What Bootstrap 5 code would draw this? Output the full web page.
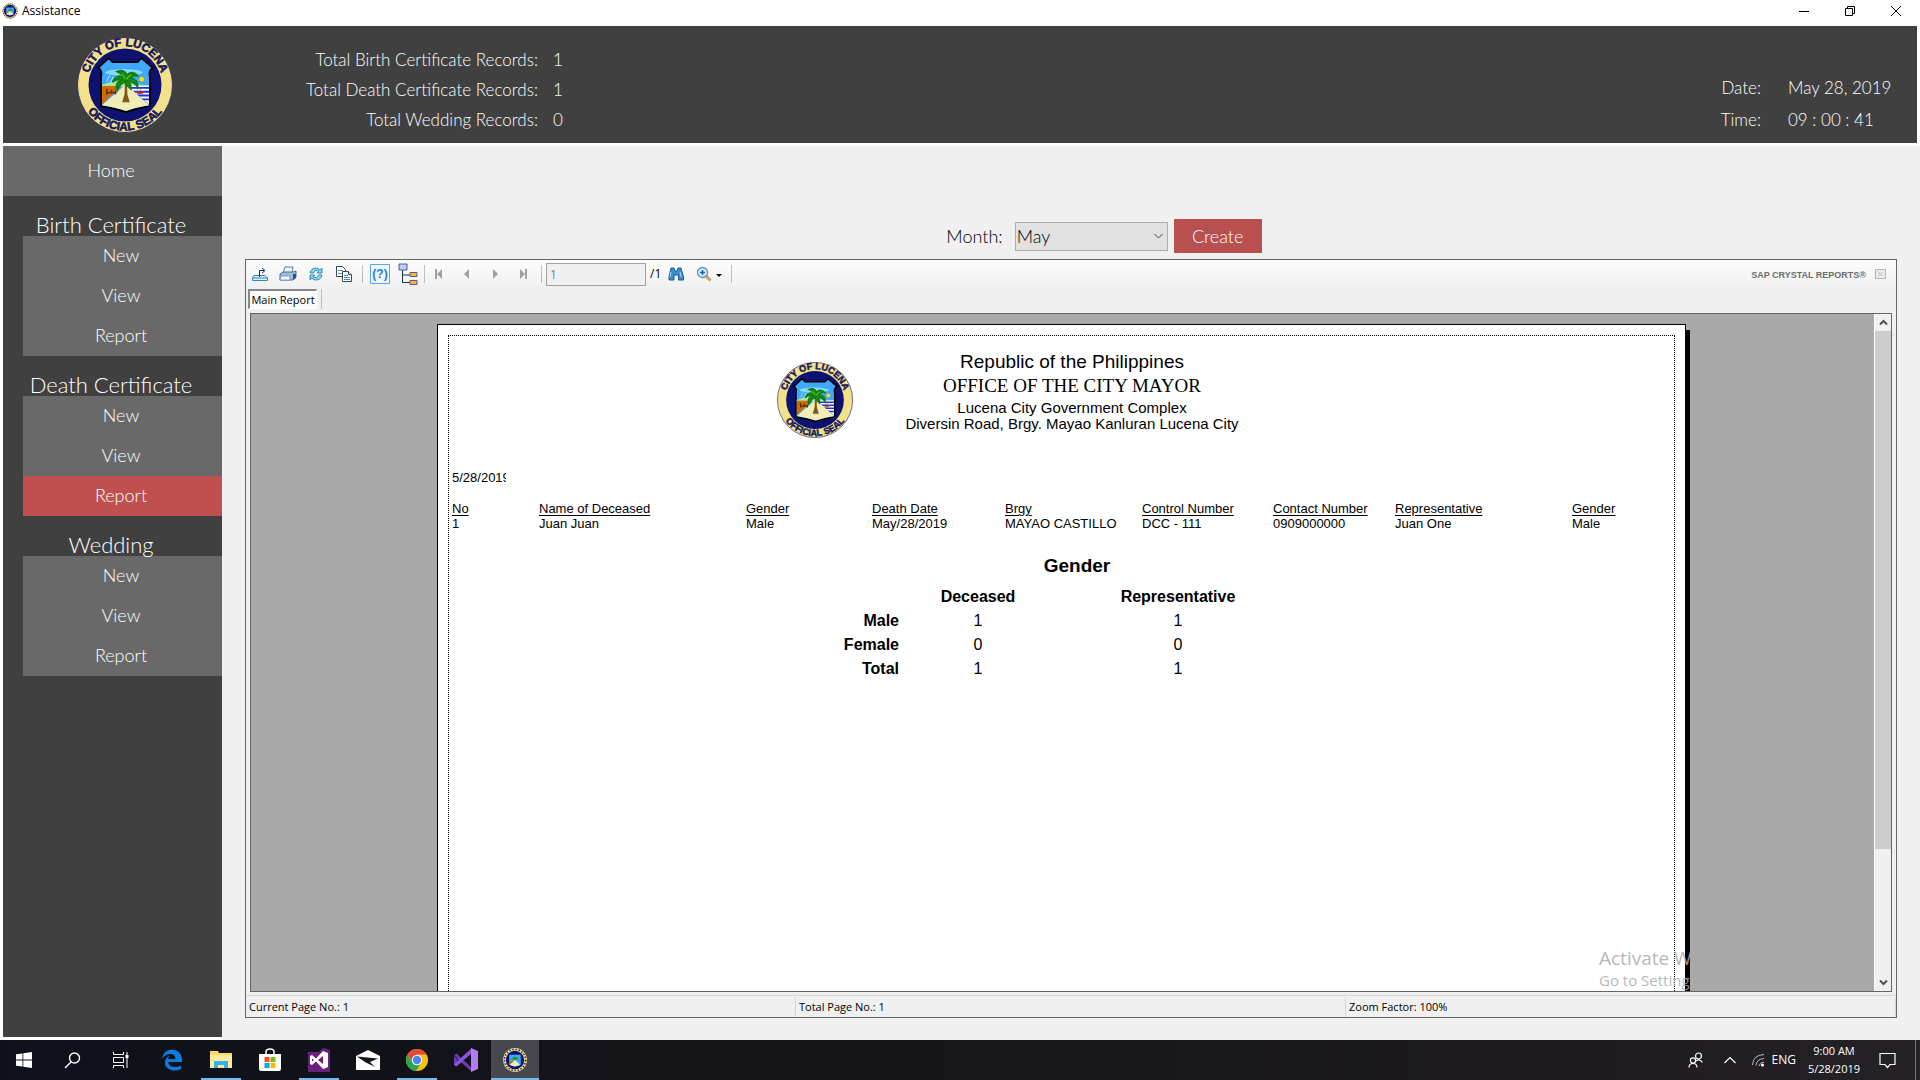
<!DOCTYPE html>
<html lang="en">
<head>
<meta charset="utf-8">
<meta name="viewport" content="width=device-width, initial-scale=1">
<title>Assistance</title>
<link href="https://cdn.jsdelivr.net/npm/bootstrap@5.3.0/dist/css/bootstrap.min.css" rel="stylesheet">
<style>
  :root { --gothic: "Century Gothic", "URW Gothic", Lato, sans-serif; --ui: "Segoe UI", "Open Sans", "Noto Sans", sans-serif; --arial: "Liberation Sans", Arial, sans-serif; }
  body { height: 100vh; min-height: 640px; background: #fff; color: #000; font-family: var(--ui); font-size: 12px; line-height: 16px; overflow: hidden; }
  svg { display: block; flex: none; }
  button { padding: 0; border: 0; background: none; color: inherit; }
  /* window frame */
  .titlebar { flex: none; height: 26px; padding: 0 18px 4px 2px; }
  .titlebar h1 { font-size: 12px; line-height: 16px; margin: 0; }
  .win-buttons { gap: 34px; }
  .masthead { flex: none; margin: 0 3px 3px; padding: 0 26px 0 74px; height: 117px; background: #404040; color: #fff; font-family: var(--gothic); font-weight: 300; font-size: 17px; }
  .totals { display: grid; grid-template-columns: 365px auto; align-content: start; column-gap: 15px; line-height: 30px; padding-top: 19px; margin: 0; text-align: right; }
  .totals dt, .clock dt { font-weight: 300; }
  .totals dd, .clock dd { margin: 0; text-align: left; }
  .clock { display: grid; grid-template-columns: auto 103px; align-content: start; column-gap: 27px; line-height: 32px; padding-top: 46px; margin: 0; text-align: right; white-space: nowrap; }
  /* side menu */
  .side { width: 219px; margin: 0 0 3px 3px; background: #404040; color: #fff; font-family: var(--gothic); font-weight: 300; flex: none; }
  .side a { display: block; height: 40px; line-height: 39px; font-size: 18px; text-align: center; color: #fff; text-decoration: none; background: #696969; padding-right: 3px; }
  .side .home { height: 50px; line-height: 49px; }
  .side h2 { font-size: 22px; line-height: 22px; font-weight: 300; margin: 0; padding: 18px 3px 0 0; text-align: center; }
  .side .sub { margin-left: 20px; }
  .side a.active { background: #c05050; }
  /* filter */
  .work { background: #f0f0f0; padding: 0 23px 22px 23px; min-width: 0; }
  .filter { flex: none; height: 113px; padding: 0 0 6px 66px; font-family: var(--gothic); font-size: 18px; font-weight: 300; }
  .filter .form-select { width: 153px; height: 29px; padding: 0 1px; font-size: 18px; font-weight: 300; line-height: 26px; color: #000; border: 1px solid #adadad; border-radius: 0; background: #e1e1e1 url("data:image/svg+xml,%3Csvg xmlns='http://www.w3.org/2000/svg' viewBox='0 0 9 6'%3E%3Cpath d='M.5 1l4 4 4-4' fill='none' stroke='%23444'/%3E%3C/svg%3E") no-repeat right 4px center / 9px 6px; }
  .filter .btn { width: 88px; height: 34px; margin-left: 6px; padding: 0; border: 0; border-radius: 0; background: #b85050; color: #fff; font-size: 18px; font-weight: 300; }
  /* report viewer */
  .viewer { border: 1px solid #646464; min-height: 0; }
  .tools { flex: none; height: 28px; background: linear-gradient(#fdfdfd, #f0f0f0); padding: 0 2px 0 0; }
  .tools button { display: flex; align-items: center; justify-content: center; width: 28px; height: 26px; }
  .tools .nav-btn { width: 28px; color: #a0a0a0; }
  .tools .find { width: 30px; }
  .tools .zoom-btn { width: 36px; }
  .tools .params { width: 33px; }
  .tools .tree { width: 24px; }
  .sep { width: 1px; height: 18px; background: #bdbdbd; }
  .pageno { width: 100px; height: 23px; border: 1px solid #a0a0a0; background: #f0f0f0; color: #838383; font-size: 12px; padding: 0 3px; line-height: 20px; }
  .brand { font: bold 9px/14px var(--arial); color: #6d6d6d; padding-top: 2px; }
  .tabs-row { flex: none; height: 25px; padding: 1px 2px 4px; }
  .tabs-row .tab { width: 69px; height: 20px; font-size: 11px; line-height: 16px; color: #000; background: #fafafa; border: 1px solid; border-width: 2px 1px 1px 2px; border-color: #888 #fff #fff #888; white-space: nowrap; }
  .stage { margin: 0 4px 3px; border: 1px solid #646464; background: #a9a9a9; min-height: 0; }
  .canvas-area { overflow: hidden; padding: 10px 2px 0 0; position: relative; min-width: 0; }
  .paper { width: 1249px; height: 900px; margin: 0 auto; border: 1px solid #000; background: #fff; box-shadow: 4px 6px 0 #000; padding: 10px; font-family: var(--arial); }
  .margin-box { height: 100%; border: 1px dotted #000; padding: 14px 0 0 3px; }
  .letterhead { margin-right: 110px; gap: 52px; }
  .letterhead .seal { margin-top: 12px; }
  .lh-text { line-height: 16px; font-size: 15px; text-align: center; }
  .lh-big { font-size: 19px; line-height: 24px; }
  .lh-office { font-family: "Felix Titling", "Liberation Serif", serif; font-size: 19px; line-height: 23px; margin-bottom: 3px; }
  .printed { width: 54px; overflow: hidden; font-size: 13px; line-height: 15px; margin: 32px 0 16px; }
  .records { table-layout: fixed; width: 100%; font-size: 13px; line-height: 15px; }
  .records th, .records td { padding: 0; font-weight: 400; white-space: nowrap; }
  .records th { text-decoration: underline; text-underline-offset: 2px; }
  .tally { margin: 23px auto 0 361px; font-size: 16px; line-height: 24px; text-align: center; }
  .tally caption { caption-side: top; color: #000; text-align: center; font-size: 19px; font-weight: 700; line-height: 24px; padding: 0 0 7px 42px; }
  .tally th, .tally td { padding: 0; }
  .tally tbody th { text-align: right; }
  .scroll { width: 17px; flex: none; background: #f0f0f0; border-left: 1px solid #fff; }
  .scroll button { width: 16px; height: 17px; display: flex; align-items: center; justify-content: center; }
  .thumb { height: 80.5%; background: #cdcdcd; }
  .status { flex: none; height: 22px; border-top: 1px solid #d5d5d5; font-size: 11px; line-height: 20px; }
  .status > div { border-right: 1px solid #d5d5d5; padding-left: 3px; margin-top: 1px; width: 551px; }
  .activate { position: absolute; right: 25px; bottom: 0; width: 250px; color: rgba(170,170,170,.85); white-space: nowrap; font-size: 15px; line-height: 22px; }
  .activate strong { font-weight: 400; font-size: 19px; display: block; }
  /* taskbar */
  .taskbar { flex: none; height: 40px; background: linear-gradient(90deg, #0e111a, #151419 40%, #1b191e 75%, #252226); color: #fff; font-size: 12px; }
  .app { width: 48px; height: 40px; margin-right: 1px; display: flex; align-items: center; justify-content: center; border-bottom: 2px solid transparent; padding-top: 2px !important; }
  .app.sys { margin-right: 0; }
  .app.open { background: linear-gradient(#76b9ed, #76b9ed) no-repeat center bottom / 40px 2px; background-origin: border-box; background-clip: border-box; }
  .app.now { background: #47484d; border-color: #76b9ed; }
  .tray { padding-right: 4px; }
  .tray .when { width: 56px; text-align: center; line-height: 18px; margin: 0 17px 0 10px; white-space: nowrap; font-size: 11px; }
  .desktop { width: 1px; height: 40px; background: #77757a; margin-left: 19px; }
</style>
</head>
<body class="d-flex flex-column">

<svg width="0" height="0" class="position-absolute" aria-hidden="true">
  <defs>
    <path id="arcTop" d="M11.400 54A39 39 0 1 1 88.600 54"/>
    <path id="arcBottom" d="M2.500 55A47.800 47.800 0 0 0 97.500 55"/>
    <symbol id="seal" viewBox="0 0 100 100">
      <circle cx="50" cy="50" r="49.500" fill="#f3e08a" stroke="#14165e" stroke-width=".8"/>
      <circle cx="50" cy="50" r="38" fill="#0d1270"/>
      <path d="M33 22L37 26H63L67 22L79 32Q74 35 76 42V72Q62 74 51 78Q38 74 25 72V42Q27 35 22 32Z" fill="#3fa9ff" stroke="#000" stroke-width="2" stroke-linejoin="round"/>
      <ellipse cx="49" cy="37" rx="20" ry="4" fill="#7fdcf8" stroke="#2a86b8" stroke-width=".5"/>
      <path d="M26 50Q38 44 48 47T75 50V52H26Z" fill="#a6e6a0"/>
      <path d="M26 51H46L26 70Z" fill="#cf6a00"/>
      <path d="M52 51H75V70Z" fill="#fff"/>
      <path d="M54 53H75M58 57H75M62 61H75M66 65H75" stroke="#1c2cf0" stroke-width="2"/>
      <path d="M49 51L26 71Q40 73 51 77Q62 73 75 71L53 51Z" fill="#f1ecb8"/>
      <path d="M31 54v6M31 58h10M36 58v-3M40 60v-4" stroke="#5a2c00" stroke-width="1.500" fill="none"/>
      <path d="M62 57h8l-2 2h-5zM66 57v-4" stroke="#a83a10" fill="#a83a10" stroke-width=".6"/>
      <path d="M34 40l-3 6M38 41l-3 6M42 41l-3 6" stroke="#dff" stroke-width=".8"/>
      <circle cx="67.500" cy="44" r="2.600" fill="#ffe600" stroke="#c08a00" stroke-width=".4"/>
      <path d="M50 46L49.500 60 47 68H55L52.500 60 52 46Z" fill="#7a5b10"/>
      <path d="M51 46Q44 35 37 47Q43 42 47 45Q39 47 42 55Q45 48 50 47Q52 51 56 54Q56 48 53 46Q60 46 63 52Q64 44 55 43Q60 38 64 41Q57 34 52 40Q49 33 42 36Q49 39 51 46Z" fill="#1f9a10" stroke="#157a0c" stroke-width="2"/>
      <path d="M46 39q3 1 4 5M56 40q-3 1-4 4" stroke="#6be63a" fill="none"/>
      <g font-family="Liberation Sans, Arial, sans-serif" font-weight="700" font-size="12" fill="#14165e" stroke="#14165e" stroke-width=".6" text-anchor="middle">
        <text><textPath href="#arcTop" startOffset="50%">CITY OF LUCENA</textPath></text>
        <text><textPath href="#arcBottom" startOffset="50%">OFFICIAL SEAL</textPath></text>
      </g>
    </symbol>
    <symbol id="sealMini" viewBox="0 0 100 100">
      <circle cx="50" cy="50" r="44" fill="#0d1270" stroke="#f3e08a" stroke-width="11"/>
      <circle cx="50" cy="50" r="44" fill="none" stroke="#14165e" stroke-width="6" stroke-dasharray="6 7"/>
      <path d="M26 28H74V70L50 78 26 70Z" fill="#3fa9ff"/>
      <path d="M26 54H46L26 70Z" fill="#cf6a00"/><path d="M50 50L28 71 50 77 72 71Z" fill="#f1ecb8"/>
      <path d="M34 46Q50 26 66 46L50 50Z" fill="#1f9a10"/>
    </symbol>
  </defs>
</svg>

<div class="titlebar d-flex align-items-center justify-content-between">
  <div class="d-flex align-items-center gap-1">
    <svg width="16" height="16"><use href="#sealMini"/></svg>
    <h1>Assistance</h1>
  </div>
  <div class="win-buttons d-flex align-items-center">
    <button aria-label="Minimize"><svg width="12" height="12" stroke="#000"><path d="M1 6.500H11"/></svg></button>
    <button aria-label="Restore"><svg width="12" height="12" fill="none" stroke="#000"><path d="M1.500 3.500h7v7h-7zM3.500 3.500v-2h7v7h-2"/></svg></button>
    <button aria-label="Close"><svg width="12" height="12" stroke="#000"><path d="M1 1L11 11M11 1L1 11"/></svg></button>
  </div>
</div>

<header class="masthead d-flex">
  <svg class="align-self-center" width="96" height="96" role="img" aria-label="City of Lucena official seal"><use href="#seal"/></svg>
  <dl class="totals">
    <dt>Total Birth Certificate Records:</dt><dd>1</dd>
    <dt>Total Death Certificate Records:</dt><dd>1</dd>
    <dt>Total Wedding Records:</dt><dd>0</dd>
  </dl>
  <dl class="clock ms-auto">
    <dt>Date:</dt><dd>May 28, 2019</dd>
    <dt>Time:</dt><dd>09 : 00 : 41</dd>
  </dl>
</header>

<div class="d-flex flex-grow-1 overflow-hidden">
  <nav class="side" aria-label="Main">
    <a class="home" href="#">Home</a>
    <h2>Birth Certificate</h2>
    <div class="sub"><a href="#">New</a><a href="#">View</a><a href="#">Report</a></div>
    <h2>Death Certificate</h2>
    <div class="sub"><a href="#">New</a><a href="#">View</a><a href="#" class="active" aria-current="page">Report</a></div>
    <h2>Wedding</h2>
    <div class="sub"><a href="#">New</a><a href="#">View</a><a href="#">Report</a></div>
  </nav>

  <main class="work d-flex flex-column flex-grow-1">
    <form class="filter d-flex justify-content-center align-items-end">
      <div class="d-flex align-items-center">
        <label for="month" class="me-2 pe-1">Month:</label>
        <select id="month" class="form-select"><option>April</option><option selected>May</option><option>June</option></select>
        <button type="button" class="btn">Create</button>
      </div>
    </form>

    <section class="viewer d-flex flex-column flex-grow-1" aria-label="Report viewer">
      <div class="tools d-flex align-items-center">
        <button aria-label="Export"><svg width="18" height="16" viewBox="0 0 18 16" fill="none"><path d="M3 9.500L1.500 12v2.500h15V12L14 9.500H3M1.500 12h15" stroke="#2f86c0" fill="#dff1fb"/><path d="M8.500 11V4.500H13M11 2l3 2.500-3 2.500" stroke="#16325c"/></svg></button>
        <button aria-label="Print"><svg width="18" height="16" viewBox="0 0 18 16"><path d="M6 1h8l-1 6H4z" fill="#eaf5ff" stroke="#5d7ea5"/><path d="M1 8l3-2h10l3-1v6l-3 3H1z" fill="#9dbcd8" stroke="#4b6a8e"/><path d="M14 8h3v4l-3 2z" fill="#27508c"/><path d="M2 10h9v4H1z" fill="#f7fbff" stroke="#5d8fc5" stroke-width=".8"/></svg></button>
        <button aria-label="Refresh"><svg width="14" height="14" viewBox="0 0 14 14"><path d="M1 6Q2 1 7 1q3 0 4 2l2-2v5H8l2-2Q6 2 4.500 6z" fill="#8fd6f0" stroke="#2785b4" stroke-width=".9"/><path d="M13 8q-1 5-6 5-3 0-4-2l-2 2V8h5l-2 2q4 2 5.500-2z" fill="#8fd6f0" stroke="#2785b4" stroke-width=".9"/></svg></button>
        <button aria-label="Copy"><svg width="18" height="18" viewBox="0 0 18 18" fill="#fff" stroke="#444"><path d="M1.500 1.500h6l3 3v7h-9z"/><path d="M3 5.500h5M3 8.500h5" stroke="#3b8fd0"/><path d="M7.500 6.500h6l3 3v7h-9z"/><path d="M13.500 6.500v3h3" /><path d="M9 10.500h4M9 12.500h6M9 14.500h6" stroke="#3b8fd0"/></svg></button>
        <span class="sep ms-1"></span>
        <button class="params" aria-label="Parameter panel"><svg width="20" height="20" viewBox="0 0 20 20"><path d="M.5 .5h19v19H.5z" fill="#eef6ff" stroke="#59a8ec"/><text x="10" y="14" text-anchor="middle" font-family="Liberation Sans, sans-serif" font-size="12" font-weight="700" fill="#1e7fe0">(?)</text></svg></button>
        <button class="tree" aria-label="Group tree"><svg width="20" height="22" viewBox="0 0 20 22"><path d="M4.500 7v12.500H12M4.500 12H12" stroke="#16325c" fill="none"/><path d="M1 1h8v6H1z" fill="#b9d3f6" stroke="#4a5a9a"/><path d="M12 9.500h7v4h-7zM12 17.500h7v4h-7z" fill="#ffb52e" stroke="#5a5a9a"/></svg></button>
        <span class="sep ms-1"></span>
        <button class="nav-btn" aria-label="First page"><svg width="8" height="10" fill="currentColor"><path d="M0 0h2v10H0zM7 0v10L2 5z"/></svg></button>
        <button class="nav-btn" aria-label="Previous page"><svg width="6" height="10" fill="currentColor"><path d="M5 0v10L0 5z"/></svg></button>
        <button class="nav-btn" aria-label="Next page"><svg width="6" height="10" fill="currentColor"><path d="M1 0v10l5-5z"/></svg></button>
        <button class="nav-btn" aria-label="Last page"><svg width="8" height="10" fill="currentColor"><path d="M6 0h2v10H6zM1 0v10l5-5z"/></svg></button>
        <span class="sep ms-1 me-1"></span>
        <input class="pageno" aria-label="Page number" value="1" disabled>
        <span class="ms-1">/1</span>
        <button class="find" aria-label="Find text"><svg width="16" height="14" viewBox="0 0 16 14"><path d="M3 1h3l1 3h2l1-3h3l2.500 9v3h-5V8H6v5H1v-3z" fill="#3b8fd0" stroke="#1f5a96"/><path d="M3 5l-1 5M12 5l1 5" stroke="#a8d8f8"/></svg></button>
        <button class="zoom-btn" aria-label="Zoom"><svg width="26" height="16" viewBox="0 0 26 16"><path d="M9.500 9.500l5 5" stroke="#e09a50" stroke-width="3"/><circle cx="6.500" cy="6.500" r="5" fill="#d8ecfb" stroke="#5f93c4" stroke-width="1.300"/><path d="M4 6.500h5M6.500 4v5" stroke="#1d5da8" stroke-width="1.500"/><path d="M20 8h6l-3 3z" fill="#000"/></svg></button>
        <span class="sep ms-1"></span>
        <span class="brand ms-auto">SAP CRYSTAL REPORTS®</span>
        <button aria-label="Close view"><svg width="11" height="11" viewBox="0 0 11 11" fill="#eee" stroke="#b4b4b4"><path d="M.5 .5h10v9h-10z"/><path d="M3 2.500l5 5M8 2.500l-5 5"/></svg></button>
      </div>
      <div class="tabs-row d-flex">
        <button class="tab" aria-pressed="true">Main Report</button>
        <span class="sep ms-1 h-100"></span>
      </div>

      <div class="stage d-flex flex-grow-1">
        <div class="canvas-area flex-grow-1">
          <article class="paper">
            <div class="margin-box">
              <div class="letterhead d-flex justify-content-center">
                <svg class="seal" width="76" height="76" role="img" aria-label="City of Lucena official seal"><use href="#seal"/></svg>
                <div class="lh-text">
                  <div class="lh-big">Republic of the Philippines</div>
                  <div class="lh-office">OFFICE OF THE CITY MAYOR</div>
                  <div>Lucena City Government Complex</div>
                  <div>Diversin Road, Brgy. Mayao Kanluran Lucena City</div>
                </div>
              </div>
              <div class="printed">5/28/2019</div>
              <table class="records">
                <colgroup><col style="width:87px"><col style="width:207px"><col style="width:126px"><col style="width:133px"><col style="width:137px"><col style="width:131px"><col style="width:122px"><col style="width:177px"><col></colgroup>
                <thead><tr><th>No</th><th>Name of Deceased</th><th>Gender</th><th>Death Date</th><th>Brgy</th><th>Control Number</th><th>Contact Number</th><th>Representative</th><th>Gender</th></tr></thead>
                <tbody><tr><td>1</td><td>Juan Juan</td><td>Male</td><td>May/28/2019</td><td>MAYAO CASTILLO</td><td>DCC - 111</td><td>0909000000</td><td>Juan One</td><td>Male</td></tr></tbody>
              </table>
              <table class="tally">
                <caption>Gender</caption>
                <colgroup><col style="width:86px"><col style="width:158px"><col style="width:242px"></colgroup>
                <thead><tr><td></td><th>Deceased</th><th>Representative</th></tr></thead>
                <tbody>
                  <tr><th>Male</th><td>1</td><td>1</td></tr>
                  <tr><th>Female</th><td>0</td><td>0</td></tr>
                  <tr><th>Total</th><td>1</td><td>1</td></tr>
                </tbody>
              </table>
            </div>
          </article>
          <div class="activate"><strong>Activate Windows</strong>Go to Settings to activate Windows.</div>
        </div>
        <div class="scroll d-flex flex-column">
          <button aria-label="Scroll up"><svg width="9" height="7" fill="none" stroke="#505050" stroke-width="2"><path d="M1 5.500l3.500-3.500 3.500 3.500"/></svg></button>
          <div class="flex-grow-1"><div class="thumb"></div></div>
          <button aria-label="Scroll down"><svg width="9" height="7" fill="none" stroke="#505050" stroke-width="2"><path d="M1 1.500l3.500 3.500 3.500-3.500"/></svg></button>
        </div>
      </div>
      <div class="status d-flex">
        <div>Current Page No.: 1</div><div>Total Page No.: 1</div><div class="flex-fill">Zoom Factor: 100%</div>
      </div>
    </section>
  </main>
</div>

<footer class="taskbar d-flex align-items-center justify-content-between">
  <div class="d-flex">
    <button class="app sys" aria-label="Start"><svg width="16" height="16" viewBox="0 0 16 16" fill="#fff"><path d="M0 2.300L6.500 1.400V7.600H0zM7.300 1.300L16 0V7.600H7.300zM0 8.400H6.500V14.600L0 13.700zM7.300 8.400H16V16L7.300 14.800z"/></svg></button>
    <button class="app sys" aria-label="Search"><svg width="17" height="17" viewBox="0 0 17 17" fill="none" stroke="#fff" stroke-width="1.400"><circle cx="10.500" cy="6" r="5"/><path d="M7 10L1 16"/></svg></button>
    <button class="app sys" aria-label="Task view"><svg width="17" height="16" viewBox="0 0 17 16" fill="none" stroke="#fff"><path d="M1.500 0v2.500h10V0M1.500 16v-2.500h10V16M1.500 5.500h10v5h-10zM15 0v2M15 7v9"/><path d="M14 3h2v3h-2z" fill="#fff"/></svg></button>
    <button class="app ms-1" aria-label="Edge"><svg width="22" height="22" viewBox="0 0 22 22"><path d="M1 10Q2 1 11 .500Q20 1 21 10V13H7Q8 18 14 18Q17 18 20 16.500V20Q17 22 12 21.500Q3 20 4 12Q5 8 9 6.500Q7 8 7 10H14.500Q14 5 9.500 5Q4 5 1 10Z" fill="#0a7be0"/></svg></button>
    <button class="app open" aria-label="File Explorer"><svg width="22" height="20" viewBox="0 0 22 20"><path d="M0 1h8l1 2h13v14H0z" fill="#ffd868"/><path d="M0 5h22v13H0z" fill="#ffe9a0"/><path d="M4 18v-7h14v7h-4v-3H8v3z" fill="#35b0ea"/></svg></button>
    <button class="app" aria-label="Store"><svg width="22" height="24" viewBox="0 0 22 24"><path d="M7 7V4q0-3 4-3t4 3v3" fill="none" stroke="#fff" stroke-width="1.500"/><path d="M0 6h22v15q0 2-2 2H2q-2 0-2-2z" fill="#fff"/><path d="M5.500 9h5v5h-5z" fill="#f25022"/><path d="M11.500 9h5v5h-5z" fill="#7fba00"/><path d="M5.500 15h5v5h-5z" fill="#00a4ef"/><path d="M11.500 15h5v5h-5z" fill="#ffb900"/></svg></button>
    <button class="app open" aria-label="Visual Studio"><svg width="22" height="24" viewBox="0 0 22 24"><path d="M0 4h11l4-4 7 2v22H0z" fill="#68217a"/><path d="M2 8l2-1 4 3.500L15 3l5 2v14l-5 2-7-7.500L4 17l-2-1zM4 10.500v3L6 12zM15 8l-5 4 5 4z" fill="#fff" fill-rule="evenodd"/></svg></button>
    <button class="app" aria-label="Mail"><svg width="24" height="20" viewBox="0 0 24 20"><path d="M0 6L12 0 24 6v14H0z" fill="#fff"/><path d="M1 6.500L22 8.500 14 12 19 17 9 12z" fill="#14151b"/></svg></button>
    <button class="app open" aria-label="Chrome"><svg width="22" height="22" viewBox="0 0 22 22"><circle cx="11" cy="11" r="11" fill="#fbbf12"/><path d="M1.500 5.500A11 11 0 0 1 20.500 5.500H11L6.500 13.500Z" fill="#e2493b"/><path d="M1.500 5.500A11 11 0 0 0 10 22L15.500 13.500H6.500Z" fill="#2ea352"/><circle cx="11" cy="11" r="5.200" fill="#fff"/><circle cx="11" cy="11" r="4.200" fill="#4a86f0"/></svg></button>
    <button class="app" aria-label="Visual Studio 2019"><svg width="24" height="24" viewBox="0 0 24 24"><path d="M0 7l2.500-1.500L18 20v4L0 8zM0 7v10l3-2.500V9.500z" fill="#6a3ab8"/><path d="M0 17l2.500 1.500L18 5V0L0 16z" fill="#8a52d6"/><path d="M17 0l7 3v18l-7 3z" fill="#b07cf0"/></svg></button>
    <button class="app now" aria-label="Assistance"><svg width="24" height="24"><use href="#sealMini"/></svg></button>
  </div>
  <div class="tray d-flex align-items-center">
    <button aria-label="People"><svg width="16" height="16" viewBox="0 0 16 16" fill="none" stroke="#fff" stroke-width="1.200"><circle cx="10.500" cy="4" r="3"/><path d="M8 9q3-3 6.500 1.500"/><circle cx="5" cy="8.500" r="2.600"/><path d="M1 15.500q0-4 4-4t4 4"/></svg></button>
    <button class="ms-3 ps-1" aria-label="Hidden icons"><svg width="12" height="8" fill="none" stroke="#fff" stroke-width="1.200"><path d="M.5 7L6 1.500 11.500 7"/></svg></button>
    <button class="ms-3" aria-label="Network"><svg width="12" height="14" viewBox="0 0 12 14" fill="none" stroke="#bbb"><path d="M.5 12Q1 2 12 1.500M4 12.500Q4.500 6 12 5.500M7 13q.5-3.500 5-4"/><circle cx="10.500" cy="12" r="1.500" fill="#fff" stroke="none"/></svg></button>
    <span class="ms-2">ENG</span>
    <div class="when">9:00 AM<br>5/28/2019</div>
    <button aria-label="Notifications"><svg width="17" height="17" viewBox="0 0 17 17" fill="none" stroke="#fff" stroke-width="1.200"><path d="M1 1.500h15v11h-5L8.500 15.500 6 12.500H1z"/></svg></button>
    <span class="desktop"></span>
  </div>
</footer>
<script src="https://cdn.jsdelivr.net/npm/bootstrap@5.3.0/dist/js/bootstrap.bundle.min.js"></script>
</body>
</html>
